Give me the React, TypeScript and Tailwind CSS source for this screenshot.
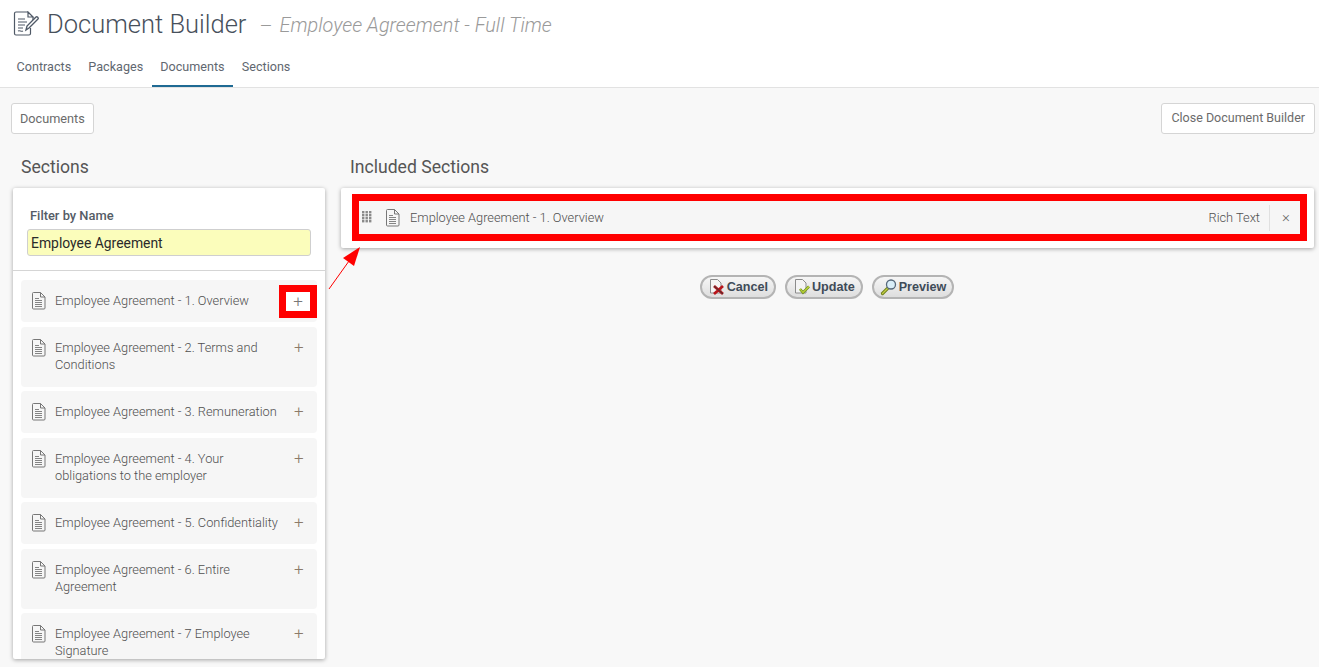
const sections = [
  { name: 'Employee Agreement - 1. Overview', tall: false, highlighted: true },
  { name: 'Employee Agreement - 2. Terms and Conditions', tall: true },
  { name: 'Employee Agreement - 3. Remuneration', tall: false },
  { name: 'Employee Agreement - 4. Your obligations to the employer', tall: true },
  { name: 'Employee Agreement - 5. Confidentiality', tall: false },
  { name: 'Employee Agreement - 6. Entire Agreement', tall: true },
  { name: 'Employee Agreement - 7 Employee Signature', tall: true },
]

const tabs = ['Contracts', 'Packages', 'Documents', 'Sections']

function DocIcon() {
  return (
    <svg width="15" height="18" viewBox="0 0 15 18" fill="none" stroke="#777" strokeWidth="1" className="shrink-0">
      <path d="M1.5 1.5a1 1 0 0 1 1-1h7l4.5 4.5v11a1 1 0 0 1-1 1h-10.500a1 1 0 0 1-1-1z" />
      <path d="M9.500 .5v4.500h4.500" />
      <path d="M4 6.500h4M4 8.500h7M4 10.500h7M4 12.500h7M4 14.500h7" strokeWidth=".9" />
    </svg>
  )
}

function TitleIcon() {
  return (
    <svg width="27" height="26" viewBox="0 0 27 26" fill="none" stroke="#4f5966" strokeWidth="1.200">
      <path d="M15 1H3a1.500 1.500 0 0 0-1.500 1.500v20A1.500 1.500 0 0 0 3 24h13a1.500 1.500 0 0 0 1.500-1.500V17" />
      <path d="M15 1l5 5h-5zM20 6v3" />
      <path d="M5 8h7M5 11h9M5 14h7M5 17h5M5 20c2-1 3 1 5 0" />
      <path d="M13 19l1-4 9-9c1-1 3 1 2 2l-9 9z" strokeWidth="1.400" />
    </svg>
  )
}

function DragDots() {
  const cells = [0, 3, 6, 9]
  return (
    <svg width="10" height="13" viewBox="0 0 10 13" fill="#8a8a8a" className="shrink-0">
      {cells.map((y) => [0, 3.500, 7].map((x) => <rect key={`${x}-${y}`} x={x} y={y} width="2.400" height="2.400" />))}
    </svg>
  )
}

function CancelIcon() {
  return (
    <svg width="18" height="18" viewBox="0 0 18 18" className="shrink-0">
      <path d="M2.500 1.500h7l3.500 3.500v10h-10.500z" fill="#f4f4f4" stroke="#8c8c8c" />
      <path d="M6 8l9 8M15 8l-9 8" stroke="#b8141a" strokeWidth="2.800" />
      <path d="M6 8l9 8" stroke="#3a3a3a" strokeWidth="1" />
    </svg>
  )
}

function UpdateIcon() {
  return (
    <svg width="18" height="18" viewBox="0 0 18 18" className="shrink-0">
      <path d="M2.500 1.500h7l3.500 3.500v10h-10.500z" fill="#f4f4f4" stroke="#8c8c8c" />
      <path d="M7 11l3 3.500 6-6" fill="none" stroke="#6f8f1c" strokeWidth="2.600" />
      <path d="M7 11l3 3.500 6-6" fill="none" stroke="#c3d93a" strokeWidth="1.100" />
    </svg>
  )
}

function PreviewIcon() {
  return (
    <svg width="18" height="18" viewBox="0 0 18 18" className="shrink-0">
      <path d="M7.500 10.500l-5 5" stroke="#6f7f1c" strokeWidth="3.200" strokeLinecap="round" />
      <path d="M7.500 10.500l-5 5" stroke="#c2cf45" strokeWidth="1.200" strokeLinecap="round" />
      <circle cx="11" cy="6.500" r="4.500" fill="#d8edf8" stroke="#55677a" strokeWidth="1.300" />
    </svg>
  )
}

function OldButton({ label, icon }: { label: string; icon: React.ReactNode }) {
  return (
    <button className="h-[24px] pl-[6px] pr-[6px] flex items-center gap-[1px] rounded-full border-2 border-[#b4b4b4] bg-gradient-to-b from-[#f6f6f6] to-[#dedede] text-[12.600px] font-bold text-[#3f4b58] font-['Liberation_Sans',sans-serif]">
      {icon}
      {label}
    </button>
  )
}

function SectionRow({ name, tall, highlighted }: { name: string; tall: boolean; highlighted?: boolean }) {
  return (
    <div className={`relative flex items-start rounded bg-[#f6f6f6] pl-[10px] pt-[12px] pr-[11px] ${tall ? 'h-[60px] mb-[4px]' : 'h-[42px] mb-[5px]'}`}>
      <DocIcon />
      <div className="ml-[9px] w-[226px] text-[12.800px] leading-[17px] font-light text-[#4f4f4f]">{name}</div>
      {highlighted ? (
        <div className="absolute left-[258px] top-[5px] w-[38px] h-[33px] border-[7px] border-[#ff0000] bg-white flex items-center justify-center text-[17px] font-light text-[#777]">+</div>
      ) : (
        <div className="absolute left-[273px] top-[10px] text-[17px] leading-[20px] font-light text-[#8b7a6a]">+</div>
      )}
    </div>
  )
}

export default function App() {
  return (
    <div className="relative h-[667px] w-[1319px] overflow-hidden bg-[#f8f8f8] font-['Roboto',sans-serif]">
      {/* Header */}
      <header className="h-[88px] bg-white border-b border-[#e2e2e2]">
        <div className="flex items-center pl-[13px] h-[47px]">
          <TitleIcon />
          <h1 className="ml-[7px] text-[25.500px] font-light text-[#47505b] leading-[30px]">Document Builder</h1>
          <span className="ml-[13px] pt-[4px] text-[20px] font-light text-[#9a9a9a] leading-[30px]">–</span>
          <span className="ml-[7px] pt-[4px] text-[19.850px] font-light italic text-[#9a9a9a] leading-[30px]">Employee Agreement - Full Time</span>
        </div>
        <nav className="flex pl-[8px] h-[40px]">
          {tabs.map((tab) => (
            <div
              key={tab}
              className={`px-[8.600px] pt-[12px] text-[12.600px] leading-[16px] text-[#5f6770] ${tab === 'Documents' ? 'border-b-2 border-[#1f6a93]' : ''}`}
            >
              {tab}
            </div>
          ))}
        </nav>
      </header>

      {/* Toolbar */}
      <div className="flex justify-between pl-[11px] pr-[4px] pt-[15px]">
        <button className="h-[31px] px-[8px] bg-white border border-[#d5d5d5] rounded-[3px] text-[12.700px] text-[#6b6b6b]">Documents</button>
        <button className="h-[31px] px-[9px] bg-white border border-[#d5d5d5] rounded-[3px] text-[12.500px] text-[#6b6b6b]">Close Document Builder</button>
      </div>

      <div className="flex pl-[13px] pr-[5px] pt-[21px]">
        {/* Sections list */}
        <div className="w-[312px] shrink-0">
          <h2 className="pl-[8px] h-[33px] text-[17.600px] leading-[24px] text-[#555]">Sections</h2>
          <div className="h-[471px] overflow-hidden bg-white rounded-[2px] shadow-[0_1px_4px_rgba(0,0,0,0.35)]">
            <div className="h-[83px] border-b border-[#d5d5d5] px-[14px] pt-[20px]">
              <label className="block pl-[3px] text-[12.900px] leading-[15px] font-medium text-[#555c66]">Filter by Name</label>
              <input
                readOnly
                value="Employee Agreement"
                className="mt-[6px] w-[284px] h-[27px] px-[3px] bg-[#fbfdbb] border border-[#cfcfcf] rounded-[3px] text-[13.900px] text-[#2a2a2a] outline-none"
              />
            </div>
            <div className="px-[8px] pt-[9px]">
              {sections.map((s) => (
                <SectionRow key={s.name} name={s.name} tall={s.tall} highlighted={s.highlighted} />
              ))}
            </div>
          </div>
        </div>

        {/* Included sections */}
        <div className="ml-[16px] flex-1">
          <h2 className="pl-[9px] h-[33px] text-[17.600px] leading-[24px] text-[#555]">Included Sections</h2>
          <div className="h-[60px] bg-white rounded-[2px] shadow-[0_1px_4px_rgba(0,0,0,0.35)] pl-[11px] pr-[7px] pt-[6px]">
            <div className="h-[47px] border-[7px] border-[#ff0000] bg-[#f6f6f6] flex items-center pl-[3px]">
              <DragDots />
              <div className="ml-[13px]"><DocIcon /></div>
              <span className="ml-[10px] text-[12.800px] font-light text-[#4f4f4f]">Employee Agreement - 1. Overview</span>
              <span className="ml-auto text-[12.800px] font-light text-[#4f4f4f]">Rich Text</span>
              <div className="ml-[9px] h-[26px] w-px bg-[#e0e0e0]" />
              <span className="w-[30px] pl-[2px] text-center text-[15px] leading-[15px] font-light text-[#666]">×</span>
            </div>
          </div>
          <div className="flex justify-center gap-[9px] pt-[27px] pr-[1px]">
            <OldButton label="Cancel" icon={<CancelIcon />} />
            <OldButton label="Update" icon={<UpdateIcon />} />
            <OldButton label="Preview" icon={<PreviewIcon />} />
          </div>
        </div>
      </div>

      {/* Annotation arrow */}
      <svg className="absolute left-[325px] top-[245px]" width="40" height="48" viewBox="0 0 40 48" fill="none">
        <path d="M4 44L24 16" stroke="#ff0000" strokeWidth="1" />
        <path d="M35 2L18 13L29 21z" fill="#ff0000" />
      </svg>
    </div>
  )
}
